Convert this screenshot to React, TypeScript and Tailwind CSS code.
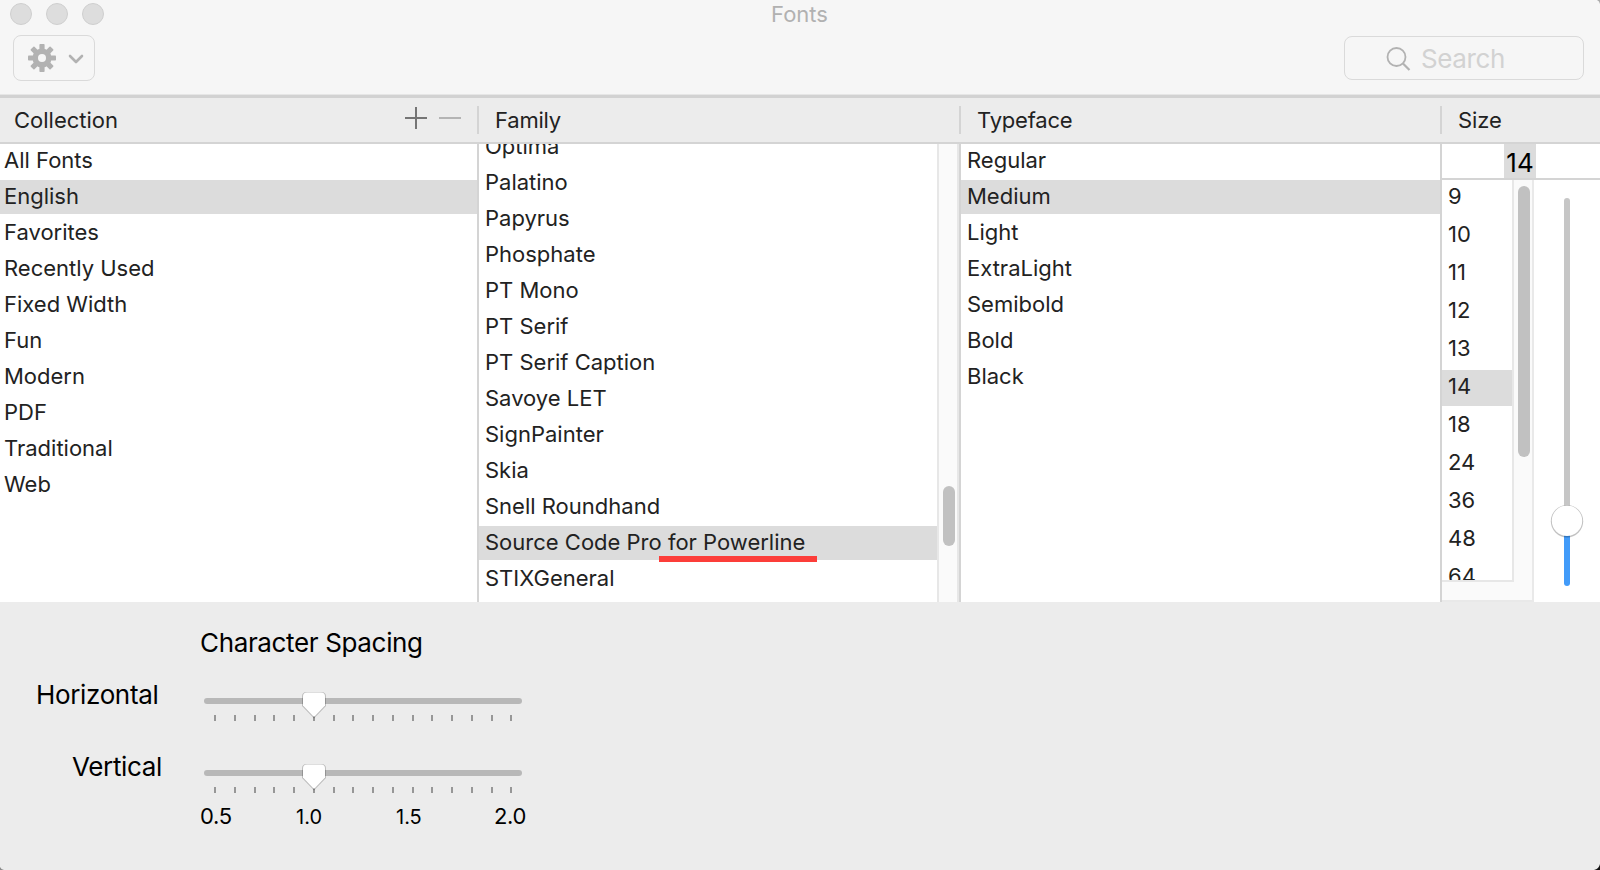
import React from "react";

const collections = ["All Fonts", "English", "Favorites", "Recently Used", "Fixed Width", "Fun", "Modern", "PDF", "Traditional", "Web"];
const families = ["Optima", "Palatino", "Papyrus", "Phosphate", "PT Mono", "PT Serif", "PT Serif Caption", "Savoye LET", "SignPainter", "Skia", "Snell Roundhand", "Source Code Pro for Powerline", "STIXGeneral"];
const typefaces = ["Regular", "Medium", "Light", "ExtraLight", "Semibold", "Bold", "Black"];
const sizes = ["9", "10", "11", "12", "13", "14", "18", "24", "36", "48", "64"];

function Row({ label, selected, inset }: { label: string; selected: boolean; inset: string }) {
  return (
    <li className="h-9 shrink-0">
      <div className={`h-[34px] whitespace-nowrap leading-8 ${inset} ${selected ? "bg-[#dcdcdc]" : ""}`}>{label}</div>
    </li>
  );
}

function HeaderCell({ label, className, children }: { label: string; className: string; children?: React.ReactNode }) {
  return (
    <div className={`flex h-7 items-center ${className}`}>
      <span className="leading-7">{label}</span>
      {children}
    </div>
  );
}

function Gear() {
  return (
    <svg width="28" height="28" viewBox="-14 -14 28 28" fill="#b2b2b2">
      {[0, 45, 90, 135].map((a) => (
        <rect key={a} x="-2.6" y="-14" width="5.2" height="28" rx="0.8" transform={`rotate(${a})`} />
      ))}
      <circle r="9.6" />
      <circle r="4" fill="#f6f6f6" />
    </svg>
  );
}

function SpacingSlider() {
  return (
    <svg width="318" height="32" viewBox="0 0 318 32" className="block">
      <rect x="0" y="8" width="318" height="6" rx="3" fill="#b8b8b8" />
      {Array.from({ length: 16 }, (_, i) => (
        <rect key={i} x={Math.round(10 + i * 19.75)} y="25" width="2" height="6" fill="#979797" />
      ))}
      <path d="M102.500 2h15q4.500 0 4.500 4.500v9.500L110 28.500 98 16V6.500q0-4.500 4.500-4.500z" fill="#000" opacity="0.2" />
      <path d="M103 2.600h14q4 0 4 4v9L110 27 99 15.600V6.600q0-4 4-4z" fill="#fff" />
    </svg>
  );
}

export default function App() {
  return (
    <div className="relative flex h-[870px] w-[1600px] flex-col overflow-hidden bg-[#ececec] font-['Inter',sans-serif] text-[22px] font-[420] text-[#222]">
      <header className="flex h-[94px] shrink-0 flex-col bg-[#f6f6f6]">
        <div className="grid h-7 grid-cols-[1fr_auto_1fr] items-center">
          <div className="flex gap-[14px] pl-[10px]">
            <i className="size-[22px] rounded-full border border-[#cfcfcf] bg-[#dddddd]" />
            <i className="size-[22px] rounded-full border border-[#cfcfcf] bg-[#dddddd]" />
            <i className="size-[22px] rounded-full border border-[#cfcfcf] bg-[#dddddd]" />
          </div>
          <span className="-ml-px leading-7 text-[#b1b1b1]">Fonts</span>
        </div>
        <div className="flex items-start justify-between pt-[7px] pr-4 pl-[13px]">
          <button className="flex h-[46px] w-[82px] items-center rounded-lg border border-[#dadada] pl-[14px]">
            <Gear />
            <svg width="16" height="10" viewBox="0 0 16 10" className="mt-px ml-3" fill="none" stroke="#b2b2b2" strokeWidth="2.600" strokeLinecap="round" strokeLinejoin="round">
              <path d="M2 2l6 6 6-6" />
            </svg>
          </button>
          <div className="mt-px flex h-11 w-60 items-center rounded-lg border border-[#dadada] pl-[41px] text-[26px] text-[#d2d2d2]">
            <svg width="26" height="26" viewBox="0 0 26 26" fill="none" stroke="#b2b2b2" strokeWidth="1.800">
              <circle cx="10.500" cy="12" r="9" />
              <path d="M17 18.500l6.500 6.500" strokeWidth="2.200" />
            </svg>
            <span className="ml-[9px] tracking-[-0.4px]">Search</span>
          </div>
        </div>
      </header>
      <div className="h-1 shrink-0 border-t border-[#e6e6e6] bg-[#d2d2d2]" />
      <div className="flex h-[46px] shrink-0 items-start border-b-2 border-[#d4d4d4] pt-2">
        <HeaderCell label="Collection" className="w-[477px] pl-[14px]">
          <svg width="58" height="24" viewBox="0 0 58 24" className="mr-[15px] ml-auto -mt-1">
            <path d="M1 12h22M12 1v22" stroke="#757575" strokeWidth="2" />
            <path d="M35 12h22" stroke="#b4b4b4" strokeWidth="2" />
          </svg>
        </HeaderCell>
        <HeaderCell label="Family" className="w-[482px] border-l-2 border-[#d4d4d4] pl-4 tracking-[-0.2px]" />
        <HeaderCell label="Typeface" className="w-[481px] border-l-2 border-[#d4d4d4] pl-4 tracking-[-0.2px]" />
        <HeaderCell label="Size" className="w-40 border-l-2 border-[#d4d4d4] pl-4 tracking-[-0.1px]" />
      </div>
      <main className="flex h-[458px] shrink-0 bg-white">
        <ul className="w-[477px]">
          {collections.map((c) => <Row key={c} label={c} selected={c === "English"} inset="pl-1" />)}
        </ul>
        <section className="flex w-[482px] overflow-hidden border-l-2 border-[#d4d4d4]">
          <ul className="-mt-[14px] w-[458px]">
            {families.map((f) => <Row key={f} label={f} selected={f.startsWith("Source")} inset="pl-[6px]" />)}
          </ul>
          <div className="relative w-[22px] border-x-2 border-[#e7e7e7] bg-[#fafafa]">
            <div className="absolute top-[342px] left-1 h-[60px] w-3 rounded-full bg-[#c1c1c1]" />
          </div>
        </section>
        <ul className="w-[481px] border-l-2 border-[#d4d4d4]">
          {typefaces.map((t) => <Row key={t} label={t} selected={t === "Medium"} inset="pl-[6px]" />)}
        </ul>
        <section className="flex w-40 flex-col border-l-2 border-[#d4d4d4]">
          <div className="flex h-9 shrink-0 justify-end border-b-2 border-[#d4d4d4] pr-16">
            <span className="w-8 bg-[#dcdcdc] text-center text-[26px] leading-[37px] text-black">14</span>
          </div>
          <div className="flex h-[422px]">
            <div className="flex w-[92px] border-r-2 border-b-2 border-[#e9e9e9] bg-[#fafafa]">
              <ul className="h-[402px] w-[72px] overflow-hidden border-r-2 border-b-2 border-[#e7e7e7] bg-white">
                {sizes.map((s) => (
                  <li key={s} className="h-[38px]">
                    <div className={`h-9 pl-[6px] leading-8 ${s === "14" ? "bg-[#dcdcdc]" : ""}`}>{s}</div>
                  </li>
                ))}
              </ul>
              <div className="mt-[6px] ml-1 h-[271px] w-3 rounded-full bg-[#c1c1c1]" />
            </div>
            <svg width="66" height="422" viewBox="0 0 66 422">
              <rect x="30" y="18" width="6" height="330" rx="3" fill="#c6c6c6" />
              <rect x="30" y="340" width="6" height="66" rx="3" fill="#429bf9" />
              <circle cx="33" cy="341.200" r="16.200" fill="#000" opacity="0.24" />
              <circle cx="33" cy="340.800" r="15.200" fill="#fff" />
            </svg>
          </div>
        </section>
      </main>
      <footer className="flex flex-1 flex-col pt-[25px] text-[26px] tracking-[-0.35px] text-black">
        <h2 className="pl-[200px] leading-8">Character Spacing</h2>
        <div className="mt-[10px] flex h-[72px]">
          <span className="w-[204px] pt-[10px] pl-[36px] leading-8">Horizontal</span>
          <div className="pt-[21px]"><SpacingSlider /></div>
        </div>
        <div className="flex h-[59px]">
          <span className="w-[204px] pt-[10px] pl-[72px] leading-8">Vertical</span>
          <div className="pt-[21px]"><SpacingSlider /></div>
        </div>
        <div className="flex items-baseline pl-[200px] text-[22px] leading-8 tracking-[-0.3px]">
          <span className="w-[96px]">0.5</span>
          <span className="w-[100px] text-[20px] tracking-normal">1.0</span>
          <span className="w-[98px] text-[20px] tracking-normal">1.5</span>
          <span>2.0</span>
        </div>
      </footer>
      <div className="pointer-events-none absolute top-[556px] left-[659px] h-[6px] w-[158px] bg-[#fc3d39]" />
      <svg width="6" height="6" viewBox="0 0 6 6" className="absolute right-0 bottom-0">
        <path d="M6 0v6H0Q5 5 6 0z" fill="#111" />
      </svg>
      <svg width="4" height="3" viewBox="0 0 4 3" className="absolute bottom-0 left-0">
        <path d="M0 0v3h4Q1 2.500 0 0z" fill="#8a8a8a" />
      </svg>
      <svg width="3" height="4" viewBox="0 0 3 4" className="absolute top-0 right-0">
        <path d="M0 0h3v4Q2.500 1 0 0z" fill="#aaa" />
      </svg>
    </div>
  );
}
